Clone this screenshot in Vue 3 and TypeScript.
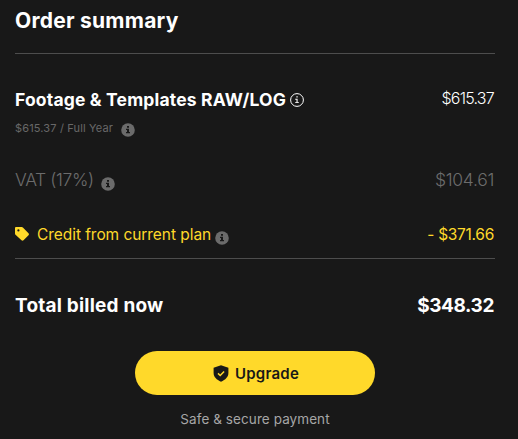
<script setup lang="ts">
interface Amounts {
  plan: string
  vat: string
  credit: string
  total: string
}

const amounts: Amounts = {
  plan: '$615.37',
  vat: '$104.61',
  credit: '- $371.66',
  total: '$348.32',
}
</script>

<template>
  <section class="summary">
    <h1 class="heading">Order summary</h1>

    <div class="row plan">
      <span class="t-plan">Footage &amp; Templates RAW/LOG</span>
      <svg class="info-outline" viewBox="0 0 14 14">
        <circle cx="7" cy="7" r="6.4" fill="none" stroke="currentColor" stroke-width="1" />
        <path d="M6.4 3.3h1.3v1.3H6.4zM5.2 5.8h2.4v3.4h1.3v.9H5.1v-.9h1.4V6.7H5.2z" fill="currentColor" />
      </svg>
      <span class="amount t-plan-amount">{{ amounts.plan }}</span>
    </div>
    <div class="row period">
      <span class="t-period">{{ amounts.plan }} / Full Year</span>
      <svg class="info" viewBox="0 0 14 14">
        <circle cx="7" cy="7" r="6.8" fill="#6b6b6b" />
        <path d="M6 3h2v1.7H6zM5 5.7h3V9h1v1.3H5V9h1V7H5z" fill="#181818" />
      </svg>
    </div>

    <div class="row vat">
      <span class="t-vat">VAT (17%)</span>
      <svg class="info" viewBox="0 0 14 14">
        <circle cx="7" cy="7" r="6.8" fill="#6b6b6b" />
        <path d="M6 3h2v1.7H6zM5 5.7h3V9h1v1.3H5V9h1V7H5z" fill="#181818" />
      </svg>
      <span class="amount t-vat-amount">{{ amounts.vat }}</span>
    </div>

    <div class="row credit">
      <svg class="tag" viewBox="0 0 14 14">
        <path fill-rule="evenodd" d="M1.2 0h5.5c.5 0 .9.2 1.2.5l5.6 5.7c.6.6.6 1.4 0 2l-5 5.1c-.6.6-1.4.6-2 0L.5 7.7C.2 7.4 0 7 0 6.5V1.2C0 .5.5 0 1.2 0zM3.4 2.3a1.1 1.1 0 1 0 0 2.2a1.1 1.1 0 0 0 0-2.2z" fill="currentColor" />
      </svg>
      <span class="t-credit">Credit from current plan</span>
      <svg class="info" viewBox="0 0 14 14">
        <circle cx="7" cy="7" r="6.8" fill="#6b6b6b" />
        <path d="M6 3h2v1.7H6zM5 5.7h3V9h1v1.3H5V9h1V7H5z" fill="#181818" />
      </svg>
      <span class="amount t-credit-amount">{{ amounts.credit }}</span>
    </div>

    <div class="row total">
      <span class="t-total">Total billed now</span>
      <span class="amount t-total-amount">{{ amounts.total }}</span>
    </div>

    <button class="upgrade" type="button">
      <svg class="shield" viewBox="0 0 16 17">
        <path d="M8 .3l7.4 2.5V8c0 3.9-3 6.8-7.4 8.7C3.6 14.8.6 11.9.6 8V2.800z" fill="currentColor" />
        <path d="M5 8.4l2.2 2.1 3.9-4.1" fill="none" stroke="#ffd92a" stroke-width="1.5" />
      </svg>
      <span class="t-upgrade">Upgrade</span>
    </button>
    <p class="safe">Safe &amp; secure payment</p>
  </section>
</template>

<style>
body {
  background: #181818;
}
</style>

<style scoped>
.summary {
  box-sizing: border-box;
  width: 518px;
  height: 439px;
  padding: 0 23px 0 15px;
  display: flex;
  flex-direction: column;
  overflow: hidden;
  background: #181818;
  color: #fff;
  font-family: Inter, "Liberation Sans", sans-serif;
  white-space: nowrap;
}
.heading {
  margin: 0;
  height: 54px;
  box-sizing: border-box;
  padding-top: 8px;
  border-bottom: 1px solid #4d4d4d;
  line-height: 25px;
  font-size: 21px;
  font-weight: 700;
  letter-spacing: 0.25px;
}
.row {
  display: flex;
  align-items: center;
}
.amount {
  margin-left: auto;
  padding-right: 1px;
}
svg {
  display: block;
  flex: none;
}
.info,
.info-outline,
.tag {
  width: 14px;
  height: 14px;
}
.plan {
  height: 24px;
  margin-top: 34px;
  font-size: 17.5px;
  line-height: 24px;
  font-weight: 700;
}
.t-plan {
  letter-spacing: 0.17px;
}
.info-outline {
  margin-left: 4px;
}
.t-plan-amount {
  font-size: 16px;
  font-weight: 300;
  letter-spacing: -0.75px;
  margin-top: -4px;
}
.period {
  height: 18px;
  margin-top: 7px;
  font-size: 11px;
  line-height: 18px;
  color: #686868;
}
.t-period {
  letter-spacing: 0.15px;
}
.period .info {
  margin: 3px 0 0 8px;
}
.vat {
  height: 26px;
  margin-top: 30px;
  font-size: 17.5px;
  line-height: 26px;
  font-weight: 300;
  color: #6c6c6c;
}
.t-vat {
  letter-spacing: -0.4px;
}
.t-vat-amount {
  letter-spacing: -0.3px;
}
.vat .info {
  margin: 7px 0 0 7px;
}
.credit {
  box-sizing: border-box;
  height: 66px;
  padding-top: 30px;
  align-items: flex-start;
  border-bottom: 1px solid #4d4d4d;
  font-size: 15.5px;
  line-height: 24px;
  color: #ffd92a;
}
.tag {
  margin-top: 4px;
}
.t-credit {
  margin-left: 8px;
  letter-spacing: -0.06px;
}
.t-credit-amount {
  letter-spacing: -0.3px;
}
.credit .info {
  margin: 8px 0 0 4px;
}
.total {
  height: 28px;
  margin-top: 33px;
  font-size: 19px;
  font-weight: 700;
  line-height: 28px;
}
.t-total {
  letter-spacing: 0.2px;
}
.t-total-amount {
  letter-spacing: -0.4px;
}
.upgrade {
  align-self: center;
  margin: 31px 0 0;
  width: 240px;
  height: 44px;
  padding: 0 0 0 2px;
  border: 0;
  border-radius: 22px;
  display: flex;
  align-items: center;
  justify-content: center;
  background: #ffd92a;
  color: #181818;
  font: 600 15px/24px Inter, "Liberation Sans", sans-serif;
}
.t-upgrade {
  margin-top: 2px;
  letter-spacing: 0.25px;
}
.shield {
  width: 16px;
  height: 17px;
  margin-right: 6px;
}
.safe {
  align-self: center;
  margin: 14px 0 0;
  font-size: 13.5px;
  line-height: 20px;
  letter-spacing: 0.08px;
  color: #a6a6a6;
}
</style>
